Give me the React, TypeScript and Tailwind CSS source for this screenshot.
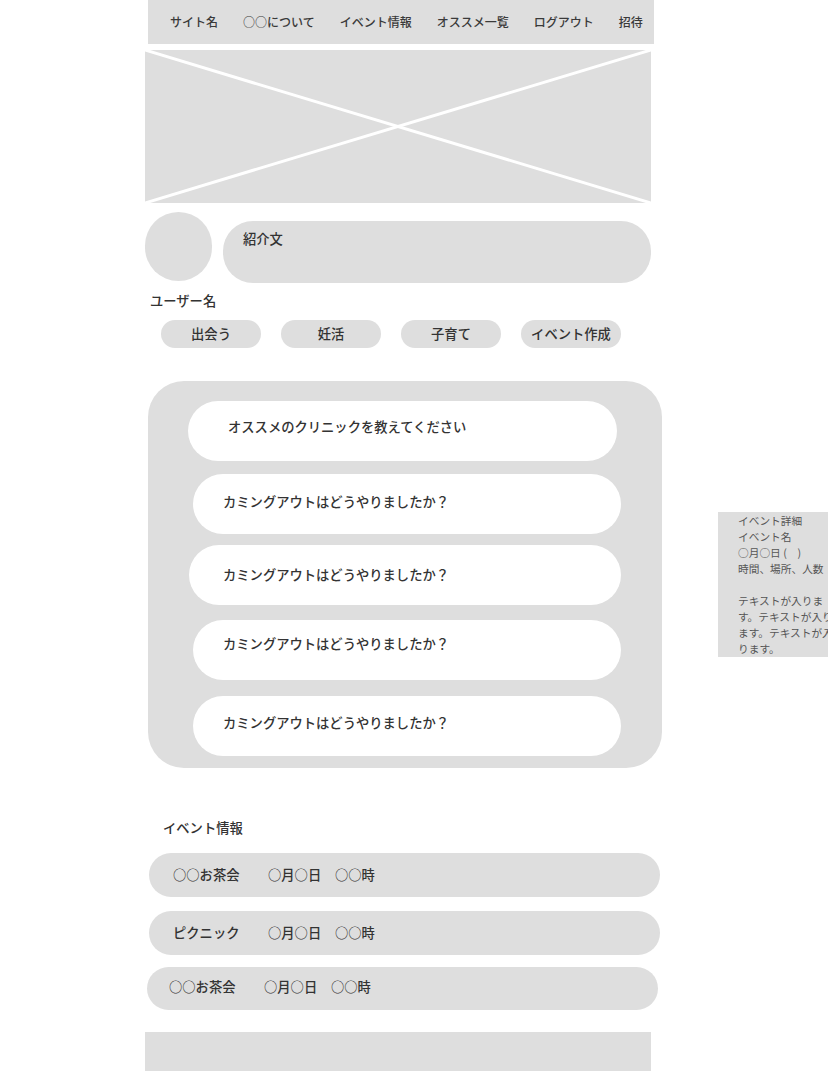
const navItems = ["サイト名", "○○について", "イベント情報", "オススメ一覧", "ログアウト", "招待"];

const tags = ["出会う", "妊活", "子育て", "イベント作成"];

const questions = [
  { text: "オススメのクリニックを教えてください", card: "mt-[20px] ml-[40px] w-[429px]", pad: "pl-[40px] pt-[16px]" },
  { text: "カミングアウトはどうやりましたか？", card: "mt-[13px] ml-[45px] w-[428px]", pad: "pl-[30px] pt-[18px]" },
  { text: "カミングアウトはどうやりましたか？", card: "mt-[11px] ml-[41px] w-[432px]", pad: "pl-[34px] pt-[20px]" },
  { text: "カミングアウトはどうやりましたか？", card: "mt-[15px] ml-[45px] w-[428px]", pad: "pl-[30px] pt-[14px]" },
  { text: "カミングアウトはどうやりましたか？", card: "mt-[16px] ml-[45px] w-[428px]", pad: "pl-[30px] pt-[17px]" },
];

const events = [
  { name: "○○お茶会", row: "mt-[15px] ml-[4px] h-[44px]", pad: "pl-[24px]" },
  { name: "ピクニック", row: "mt-[14px] ml-[4px] h-[44px]", pad: "pl-[24px]" },
  { name: "○○お茶会", row: "mt-[12px] ml-[2px] h-[43px] pb-[3px]", pad: "pl-[22px]" },
];

export default function App() {
  return (
    <div
      className="w-[828px] h-[1071px] overflow-hidden bg-white text-[#333] text-[13.3px] leading-[20px]"
      style={{ fontFamily: '"Noto Sans CJK JP", "Noto Sans", sans-serif' }}
    >
      <div className="flex pl-[145px]">
        <div className="w-[517px] shrink-0 flex flex-col">
          {/* nav */}
          <div className="ml-[3px] w-[506px] h-[44px] bg-[#dedede] flex items-center pl-[22px] gap-[25px] text-[12px] font-medium text-[#3a3a3a]">
            {navItems.map((item) => (
              <span key={item} className="whitespace-nowrap">{item}</span>
            ))}
          </div>

          {/* hero placeholder */}
          <div className="mt-[6px] w-[506px] h-[153px] bg-[#dedede]">
            <svg className="w-full h-full" viewBox="0 0 506 153" preserveAspectRatio="none">
              <line x1="0" y1="0" x2="506" y2="153" stroke="white" strokeWidth="3" />
              <line x1="506" y1="0" x2="0" y2="153" stroke="white" strokeWidth="3" />
            </svg>
          </div>

          {/* profile */}
          <div className="mt-[9px] flex items-start">
            <div className="w-[67px] h-[69px] rounded-full bg-[#dedede] shrink-0" />
            <div className="ml-[11px] mt-[9px] w-[428px] h-[62px] rounded-[30px] bg-[#dedede] pl-[20px] pt-[8px] font-medium">
              紹介文
            </div>
          </div>
          <div className="mt-[8px] pl-[5px] font-medium">ユーザー名</div>

          <div className="mt-[9px] pl-[16px] flex gap-[20px]">
            {tags.map((t) => (
              <div
                key={t}
                className="w-[100px] h-[28px] rounded-full bg-[#dedede] flex items-center justify-center font-medium"
              >
                {t}
              </div>
            ))}
          </div>

          {/* questions */}
          <div className="mt-[33px] ml-[3px] w-[514px] h-[387px] rounded-[36px] bg-[#dedede] flex flex-col">
            {questions.map((q, i) => (
              <div key={i} className={`${q.card} h-[60px] rounded-[30px] bg-white font-medium ${q.pad}`}>
                {q.text}
              </div>
            ))}
          </div>

          {/* events */}
          <div className="mt-[50px] pl-[18px] font-medium">イベント情報</div>
          {events.map((e, i) => (
            <div
              key={i}
              className={`${e.row} w-[511px] rounded-full bg-[#dedede] flex items-center font-medium ${e.pad}`}
            >
              <span className="w-[95px] whitespace-nowrap">{e.name}</span>
              <span className="w-[67px] whitespace-nowrap">○月○日</span>
              <span className="whitespace-nowrap">○○時</span>
            </div>
          ))}

          <div className="mt-[22px] w-[506px] h-[80px] bg-[#dedede]" />
        </div>

        {/* side note */}
        <div className="ml-[56px] mt-[512px] w-[130px] shrink-0 self-start bg-[#dedede] pl-[20px] pt-[1px] text-[10.7px] leading-[16px] text-[#555]">
          <div className="w-[100px]">
            <p>イベント詳細</p>
            <p>イベント名</p>
            <p className="whitespace-pre">○月○日 (　)</p>
            <p className="whitespace-nowrap">時間、場所、人数</p>
            <p>&nbsp;</p>
            <p>テキストが入ります。テキストが入ります。テキストが入ります。</p>
          </div>
        </div>
      </div>
    </div>
  );
}
